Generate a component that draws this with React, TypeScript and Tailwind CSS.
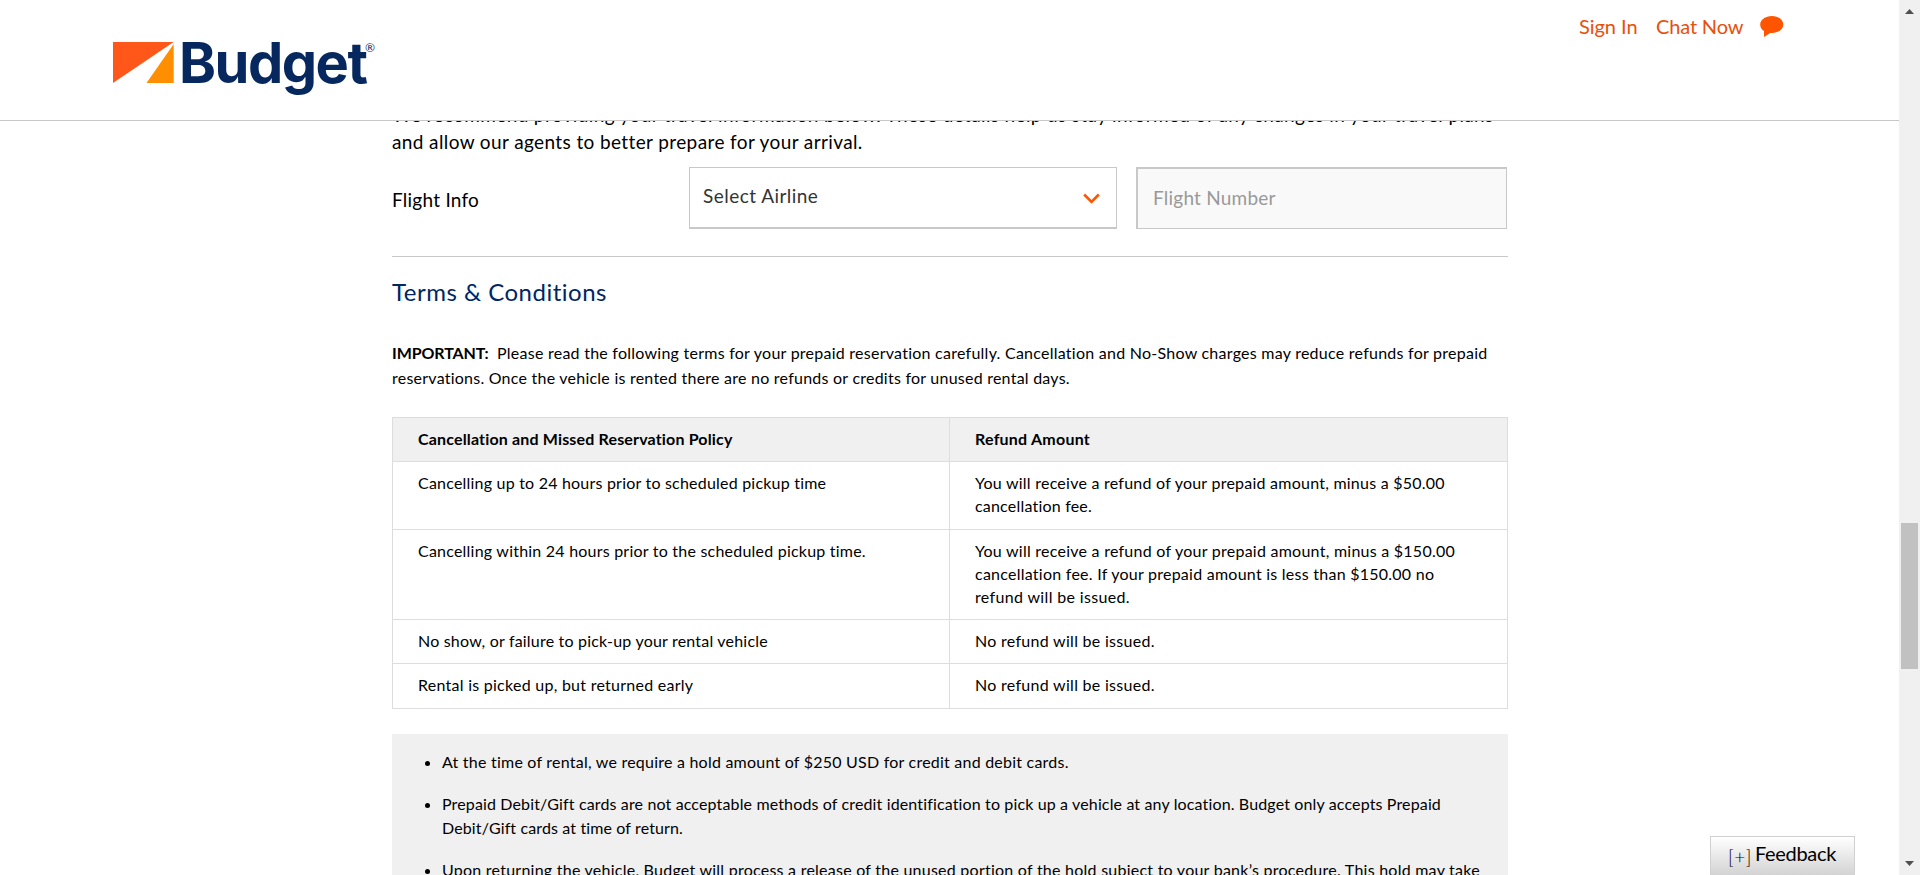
import type { ReactNode } from "react";

type LineProps = { className: string; children: ReactNode };

function Line({ className, children }: LineProps) {
  return <span className={`block whitespace-nowrap ${className}`}>{children}</span>;
}

function Header() {
  return (
    <header className="relative z-10 flex h-[121px] shrink-0 justify-between border-b border-[#c8c8c8] bg-white pr-[115px] pl-[113px]">
      <div className="flex pt-[42px]">
        <svg width="61" height="41" viewBox="0 0 61 41" aria-hidden="true">
          <path d="M0 0H60.7L0 41Z" fill="#ff571a" />
          <path d="M60.7 2V41H33.5Z" fill="#ff8f00" />
        </svg>
        <span className="-mt-[13px] ml-[5px] h-[68px] w-[186px] font-['Inter',sans-serif] text-[56px] leading-[68px] font-[650] tracking-[-1.5px] whitespace-nowrap text-[#06285e]">
          Budget
        </span>
        <span className="-mt-[1px] font-['Lato',sans-serif] text-[12px] leading-[14px] text-[#06285e]">®</span>
      </div>
      <nav className="flex items-start pt-[13px] text-[20px] leading-[26px] text-[#e8500a]">
        <a className="w-[77px] tracking-[-0.05px] whitespace-nowrap">Sign In</a>
        <a className="w-[104px] tracking-[-0.15px] whitespace-nowrap">Chat Now</a>
        <svg className="mt-[3px]" width="24" height="21" viewBox="0 0 24 21" aria-hidden="true">
          <path
            d="M12 0C5.400 0 .2 3.800.2 8.500c0 3.200 1.700 5.200 3.800 6.500V21l6.300-4c.5.1 1 .1 1.500.1 6.500 0 11.500-3.800 11.500-8.600S18.500 0 12 0Z"
            fill="#ff5500"
          />
        </svg>
      </nav>
    </header>
  );
}

function FlightInfo() {
  return (
    <div className="mt-3 flex h-[62px] text-[19px] leading-[27px]">
      <div className="w-[297px] pt-[19px]">
        <Line className="tracking-[0.25px]">Flight Info</Line>
      </div>
      <div className="flex w-[428px] justify-between border border-b-2 border-[#c8c8c8] bg-white pt-[14px] pr-[16px] pl-[13px] text-[#333]">
        <Line className="tracking-[0.46px]">Select Airline</Line>
        <svg className="mt-[11px]" width="17" height="12" viewBox="0 0 17 12" aria-hidden="true">
          <path d="M1.200 1.500 8.500 9 15.800 1.500" fill="none" stroke="#ff5500" strokeWidth="2.600" />
        </svg>
      </div>
      <div className="ml-[19px] w-[371px] border border-t-2 border-l-2 border-[#c8c8c8] bg-[#f9f9f9] pt-[15px] pl-[15px] text-[#999]">
        <Line className="tracking-[0.22px]">Flight Number</Line>
      </div>
    </div>
  );
}

function Row({ className, left, right }: { className: string; left: ReactNode; right: ReactNode }) {
  return (
    <div className={`flex border-b border-[#ddd] ${className}`}>
      <div className="w-[557px] border-r border-[#ddd] pt-[9px] pl-[25px]">{left}</div>
      <div className="flex-1 border-r border-[#ddd] pt-[9px] pl-[25px]">{right}</div>
    </div>
  );
}

function PolicyTable() {
  return (
    <div className="mt-[27px] border-t border-l border-[#ddd] leading-[23px]">
      <Row
        className="h-[44px] bg-[#f0f0f0] font-bold"
        left={<Line className="tracking-[0.16px]">Cancellation and Missed Reservation Policy</Line>}
        right={<Line className="tracking-[0.23px]">Refund Amount</Line>}
      />
      <Row
        className="h-[68px]"
        left={<Line className="tracking-[0.21px]">Cancelling up to 24 hours prior to scheduled pickup time</Line>}
        right={
          <>
            <Line className="tracking-[0.24px]">You will receive a refund of your prepaid amount, minus a $50.00</Line>
            <Line className="tracking-[0.2px]">cancellation fee.</Line>
          </>
        }
      />
      <Row
        className="h-[90px]"
        left={<Line className="tracking-[0.22px]">Cancelling within 24 hours prior to the scheduled pickup time.</Line>}
        right={
          <>
            <Line className="tracking-[0.25px]">You will receive a refund of your prepaid amount, minus a $150.00</Line>
            <Line className="tracking-[0.25px]">cancellation fee. If your prepaid amount is less than $150.00 no</Line>
            <Line className="tracking-[0.34px]">refund will be issued.</Line>
          </>
        }
      />
      <Row
        className="h-[44px]"
        left={<Line className="tracking-[0.2px]">No show, or failure to pick-up your rental vehicle</Line>}
        right={<Line className="tracking-[0.29px]">No refund will be issued.</Line>}
      />
      <Row
        className="h-[45px]"
        left={<Line className="tracking-[0.26px]">Rental is picked up, but returned early</Line>}
        right={<Line className="tracking-[0.29px]">No refund will be issued.</Line>}
      />
    </div>
  );
}

function Item({ children }: { children: ReactNode }) {
  return (
    <li className="flex">
      <span className="mt-[11px] mr-[12px] size-[5px] shrink-0 rounded-full bg-black" />
      <div>{children}</div>
    </li>
  );
}

function Notes() {
  return (
    <ul className="mt-[25px] flex h-[200px] flex-col gap-[18px] bg-[#f0f0f0] pt-[16px] pl-[33px] leading-[24px]">
      <Item>
        <Line className="tracking-[0.225px]">At the time of rental, we require a hold amount of $250 USD for credit and debit cards.</Line>
      </Item>
      <Item>
        <Line className="tracking-[0.14px]">
          Prepaid Debit/Gift cards are not acceptable methods of credit identification to pick up a vehicle at any location. Budget only accepts Prepaid
        </Line>
        <Line className="tracking-[0.13px]">Debit/Gift cards at time of return.</Line>
      </Item>
      <Item>
        <Line className="tracking-[0.245px]">
          Upon returning the vehicle, Budget will process a release of the unused portion of the hold subject to your bank’s procedure. This hold may take
        </Line>
      </Item>
    </ul>
  );
}

function Scrollbar() {
  return (
    <div className="flex w-[21px] flex-col items-center bg-[#f0f0f0]">
      <svg className="mt-[9px]" width="9" height="5" viewBox="0 0 9 5" aria-hidden="true">
        <path d="M0 5 4.500 0 9 5Z" fill="#505050" />
      </svg>
      <div className="mt-[509px] h-[146px] w-[17px] bg-[#c1c1c1]" />
      <svg className="mt-[192px]" width="9" height="5" viewBox="0 0 9 5" aria-hidden="true">
        <path d="M0 0H9L4.500 5Z" fill="#505050" />
      </svg>
    </div>
  );
}

export default function App() {
  return (
    <div className="flex h-[875px] w-[1920px] overflow-hidden bg-white font-['Lato',sans-serif] text-base text-black">
      <div className="relative flex h-[875px] w-[1899px] flex-col overflow-hidden">
        <Header />
        <main className="-mt-[20px] ml-[392px] w-[1116px]">
          <div className="text-[19px] leading-[27px]">
            <Line className="tracking-[0.365px]">
              We recommend providing your travel information below. These details help us stay informed of any changes in your travel plans
            </Line>
            <Line className="tracking-[0.385px]">and allow our agents to better prepare for your arrival.</Line>
          </div>
          <FlightInfo />
          <hr className="mt-[27px] border-[#c8c8c8]" />
          <h2 className="mt-[20px] text-[24px] leading-[30px] text-[#002663]">
            <Line className="tracking-[0.5px]">Terms &amp; Conditions</Line>
          </h2>
          <div className="mt-[33px] leading-[25px]">
            <div className="flex">
              <strong className="w-[105px] tracking-[-0.1px]">IMPORTANT:</strong>
              <Line className="tracking-[0.25px]">
                Please read the following terms for your prepaid reservation carefully. Cancellation and No-Show charges may reduce refunds for prepaid
              </Line>
            </div>
            <Line className="tracking-[0.235px]">
              reservations. Once the vehicle is rented there are no refunds or credits for unused rental days.
            </Line>
          </div>
          <PolicyTable />
          <Notes />
        </main>
        <button className="absolute top-[836px] right-[44px] flex h-[40px] w-[145px] border border-b-0 border-[#d0d0d0] bg-linear-to-b from-white to-[#d2d2d2] pl-[17px]">
          <span className="w-[27px] pt-[8px] text-left text-[19px] leading-[24px] font-light tracking-[0.5px]">[+]</span>
          <span className="pt-[3px] text-[20px] leading-[26px] tracking-[-0.33px]">Feedback</span>
        </button>
      </div>
      <Scrollbar />
    </div>
  );
}
